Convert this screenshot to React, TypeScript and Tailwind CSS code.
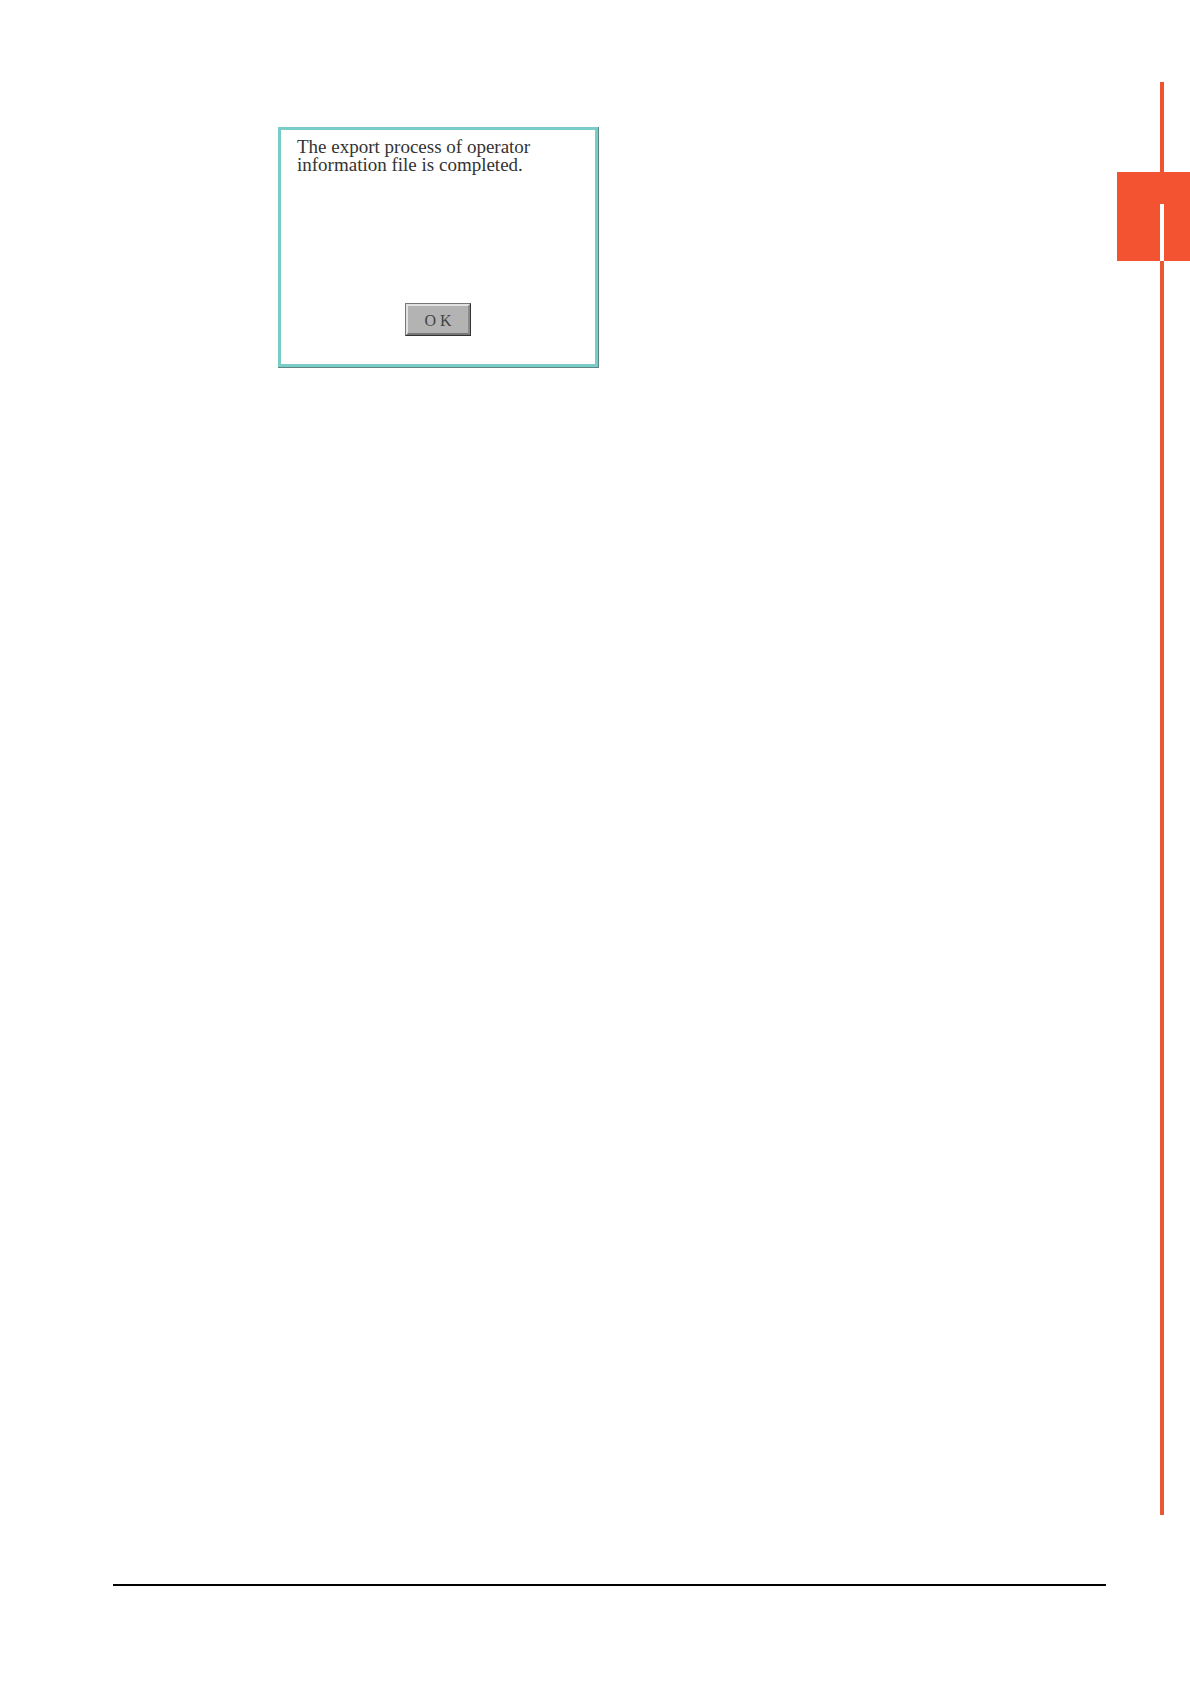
type MessageDialogProps = {
  lines: string[];
  action: string;
};

// Terminal style message window with a single confirmation button.
function MessageDialog({ lines, action }: MessageDialogProps) {
  return (
    <section
      role="dialog"
      aria-labelledby="dialog-message"
      className="w-full max-w-[321px] border-r border-b border-[#5c8583] font-['Liberation_Serif',serif]"
    >
      <div className="flex min-h-60 flex-col items-center justify-between border-3 border-[#7accc8] px-4 pt-2 pb-7">
        <p id="dialog-message" className="w-full text-[19px] leading-[18px] text-[#333333]">
          {lines.map((line) => (
            <span key={line} className="block whitespace-nowrap">
              {line}
            </span>
          ))}
        </p>
        <button
          type="button"
          className="border border-t-[#777777] border-r-[#333333] border-b-[#333333] border-l-[#777777] bg-[#b3b3b3] text-base leading-[25px] text-[#444444]"
        >
          <span className="block w-16 border-2 border-t-[#e2e2e2] border-r-[#8a8a8a] border-b-[#777777] border-l-[#e2e2e2] pt-0.5">
            {action}
          </span>
        </button>
      </div>
    </section>
  );
}

// Vertical line down the page edge, with the chapter tab on it.
function ChapterRail() {
  return (
    <aside className="flex w-[73px] shrink-0 flex-col pt-[82px] pb-[169px]">
      <div className="ml-[43px] h-[90px] w-1 bg-[#f05330]" />
      <div className="flex h-[89px] items-end bg-[#f35330] pl-[43px]">
        <div className="h-[57px] w-1 bg-white" />
      </div>
      <div className="ml-[43px] w-1 flex-1 bg-[#ea5735]" />
    </aside>
  );
}

export default function App() {
  return (
    <div className="flex min-h-screen bg-white">
      <div className="flex flex-1 flex-col pt-[127px] pr-[11px] pb-[98px] pl-[113px]">
        <main className="flex-1 pl-[165px]">
          <MessageDialog
            lines={["The export process of operator", "information file is completed."]}
            action="O K"
          />
        </main>
        <hr className="border-t-2 border-black" />
      </div>
      <ChapterRail />
    </div>
  );
}
